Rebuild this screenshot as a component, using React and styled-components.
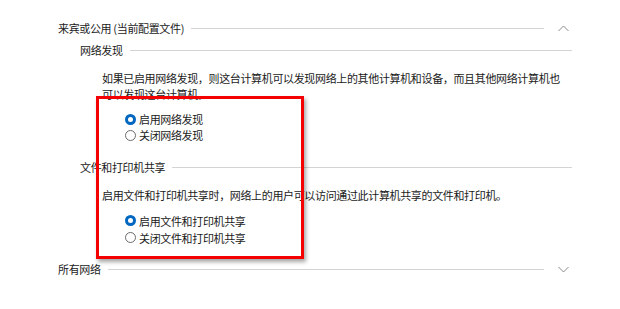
import React from "react";
import styled, { createGlobalStyle } from "styled-components";

const Global = createGlobalStyle`
  html, body { margin: 0; padding: 0; background: #fff; }
  body { font-family: "Noto Sans CJK SC", "Noto Sans", sans-serif; color: #111; }
`;

const Page = styled.div`
  position: relative;
  width: 620px;
  height: 309px;
  overflow: hidden;
  background: #fff;
  font-size: 11px;
  letter-spacing: -0.35px;
`;

const Flow = styled.div`
  display: flex;
  flex-direction: column;
`;

const HeaderRow = styled.div`
  display: flex;
  align-items: center;
  height: 20px;
  margin-top: ${(p) => p.$mt}px;
  padding-left: ${(p) => (p.$sub ? 80 : 58)}px;
  padding-right: ${(p) => (p.$sub ? 48 : 45)}px;
  gap: 7px;
  white-space: nowrap;
`;

const Title = styled.span`
  font-size: 11px;
  line-height: 20px;
  color: #1a1a1a;
`;

const Rule = styled.div`
  flex: 1;
  height: 1px;
  background: #d4d4d4;
`;

const ChevronBox = styled.div`
  width: 24px;
  display: flex;
  justify-content: center;
  align-items: center;
`;

const Para = styled.p`
  margin: ${(p) => p.$mt}px 0 0 102px;
  font-size: 11px;
  line-height: 16px;
  color: #1a1a1a;
  white-space: nowrap;
`;

const RadioGroup = styled.div`
  display: flex;
  flex-direction: column;
  margin-top: ${(p) => p.$mt}px;
  padding-left: 125px;
`;

const RadioRow = styled.label`
  display: flex;
  align-items: center;
  gap: 3px;
  height: ${(p) => p.$h}px;
  font-size: 11px;
  color: #1a1a1a;
`;

const RadioDot = styled.span`
  box-sizing: border-box;
  width: 11px;
  height: 11px;
  border-radius: 50%;
  background: #fff;
  border: ${(p) => (p.$on ? "3px solid #0067c0" : "1px solid #6a6a6a")};
`;

const Highlight = styled.div`
  position: absolute;
  left: 96px;
  top: 96px;
  width: 208px;
  height: 163px;
  box-sizing: border-box;
  border: 3px solid #f40000;
  box-shadow: 2px 3px 4px rgba(0, 0, 0, 0.35);
  pointer-events: none;
`;

const Chevron = ({ up }) => (
  <ChevronBox>
    <svg width="11" height="7" viewBox="0 0 11 7">
      <polyline
        points={up ? "0.5,6 5.5,1 10.5,6" : "0.5,1 5.5,6 10.5,1"}
        fill="none"
        stroke="#8a8a8a"
        strokeWidth="1"
      />
    </svg>
  </ChevronBox>
);

const Radio = ({ on, h, children }) => (
  <RadioRow $h={h}>
    <RadioDot $on={on} />
    <span>{children}</span>
  </RadioRow>
);

export default function App() {
  return (
    <Page>
      <Global />
      <Flow>
        <HeaderRow $mt={-17}>
          <Title>专用</Title>
          <Rule />
          <Chevron up={false} />
        </HeaderRow>
        <HeaderRow $mt={15}>
          <Title>来宾或公用 (当前配置文件)</Title>
          <Rule />
          <Chevron up />
        </HeaderRow>
        <HeaderRow $sub $mt={2}>
          <Title>网络发现</Title>
          <Rule />
        </HeaderRow>
        <Para $mt={10}>
          如果已启用网络发现，则这台计算机可以发现网络上的其他计算机和设备，而且其他网络计算机也
          <br />
          可以发现这台计算机。
        </Para>
        <RadioGroup $mt={9}>
          <Radio on h={16}>启用网络发现</Radio>
          <Radio h={16}>关闭网络发现</Radio>
        </RadioGroup>
        <HeaderRow $sub $mt={14}>
          <Title>文件和打印机共享</Title>
          <Rule />
        </HeaderRow>
        <Para $mt={10}>
          启用文件和打印机共享时，网络上的用户可以访问通过此计算机共享的文件和打印机。
        </Para>
        <RadioGroup $mt={9}>
          <Radio on h={17}>启用文件和打印机共享</Radio>
          <Radio h={17}>关闭文件和打印机共享</Radio>
        </RadioGroup>
        <HeaderRow $mt={13}>
          <Title>所有网络</Title>
          <Rule />
          <Chevron up={false} />
        </HeaderRow>
      </Flow>
      <Highlight />
    </Page>
  );
}
